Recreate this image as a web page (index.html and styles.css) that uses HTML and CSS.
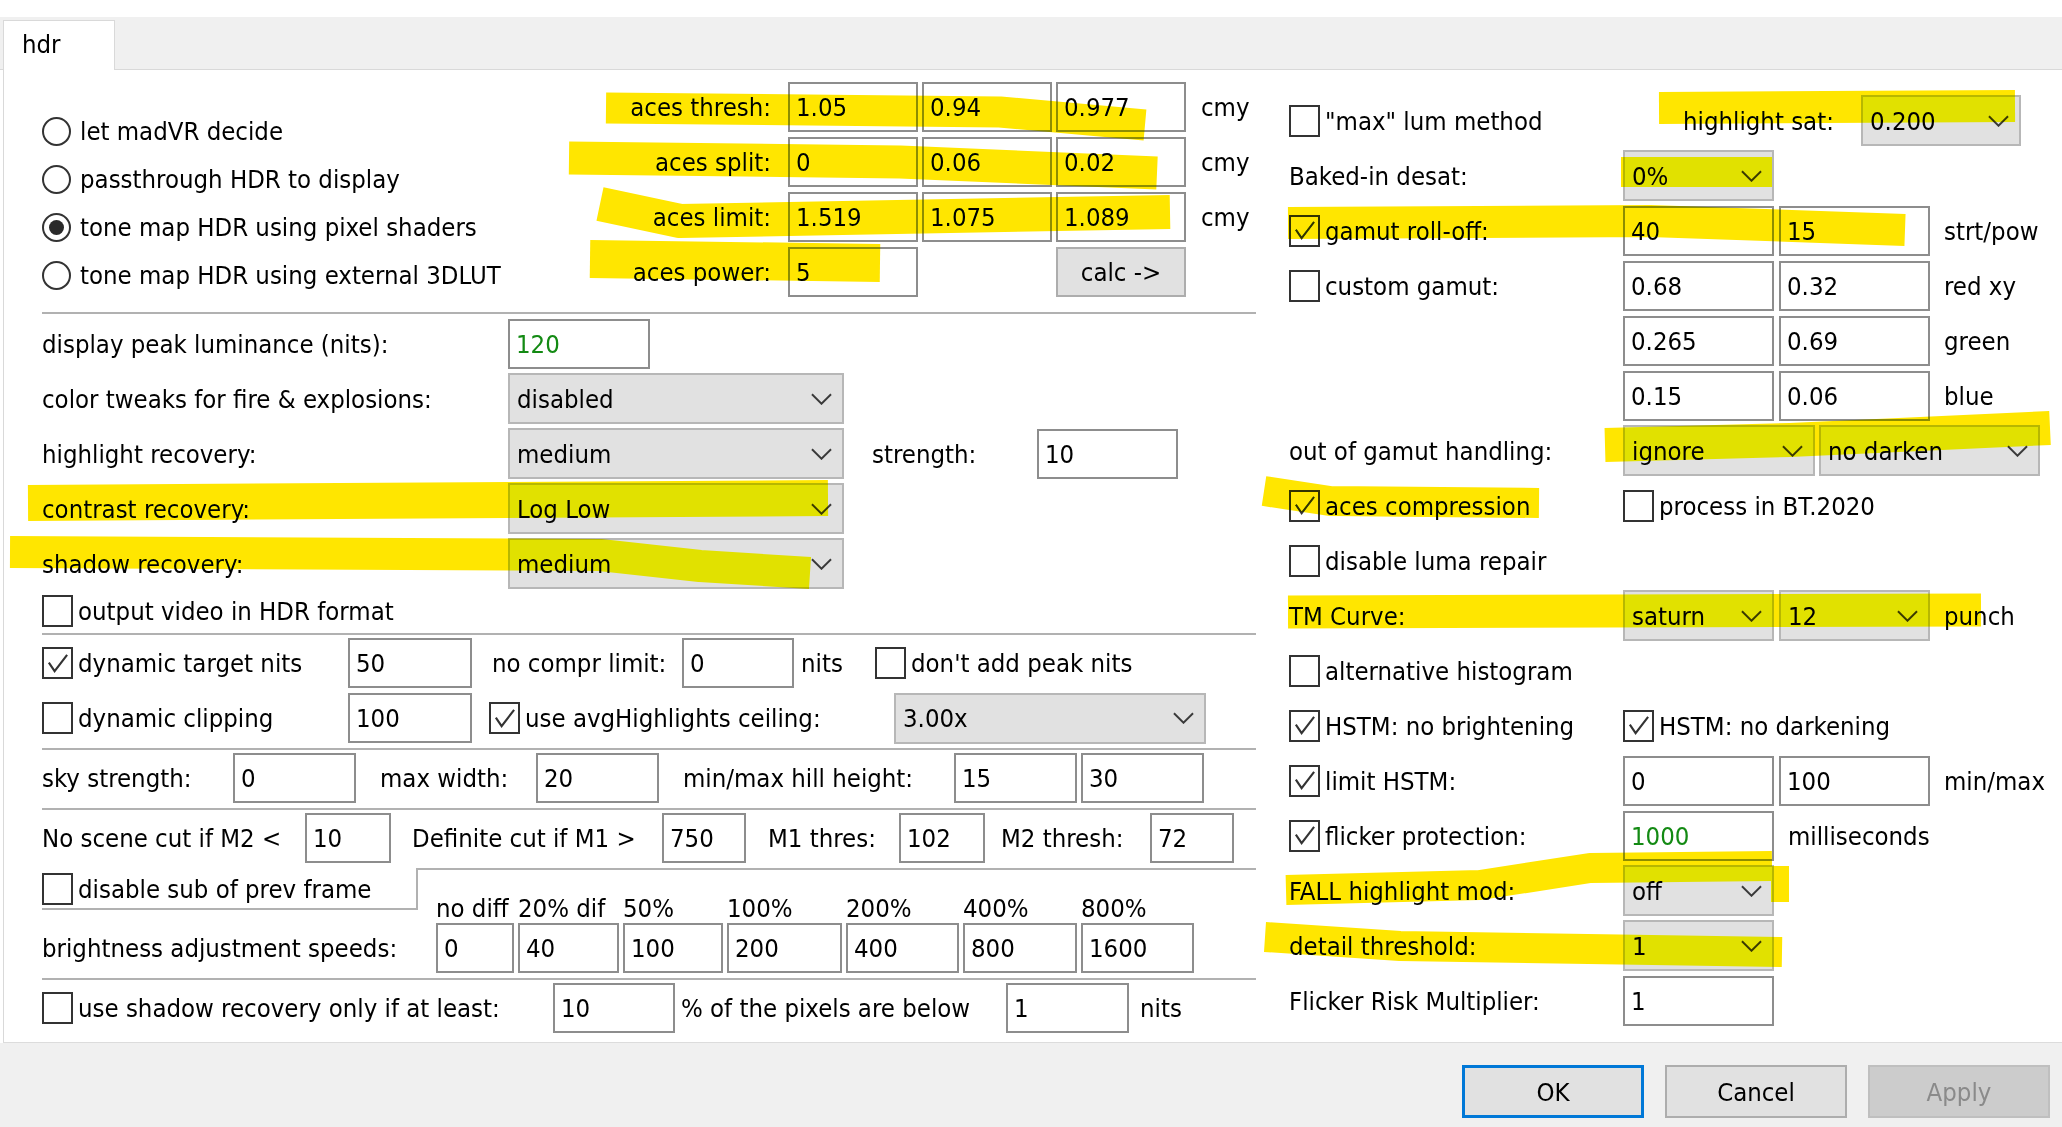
FILE: index.html
```html
<!DOCTYPE html>
<html>
<head>
<meta charset="utf-8">
<link rel="stylesheet" href="styles.css">
</head>
<body>
<div class="win">
  <div class="topgap"></div>
  <div class="tabbar"><div class="tab">hdr</div></div>
  <div class="panel">
    <div class="leftcol">
      <div class="secA">
        <div class="radios">
          <div class="rrow"><span class="radio"></span><span>let madVR decide</span></div>
          <div class="rrow"><span class="radio"></span><span>passthrough HDR to display</span></div>
          <div class="rrow"><span class="radio on"></span><span>tone map HDR using pixel shaders</span></div>
          <div class="rrow"><span class="radio"></span><span>tone map HDR using external 3DLUT</span></div>
        </div>
        <div class="aces">
          <div class="alab">aces thresh:</div><div class="inp">1.05</div><div class="inp">0.94</div><div class="inp">0.977</div><div class="unit">cmy</div>
          <div class="alab">aces split:</div><div class="inp">0</div><div class="inp">0.06</div><div class="inp">0.02</div><div class="unit">cmy</div>
          <div class="alab">aces limit:</div><div class="inp">1.519</div><div class="inp">1.075</div><div class="inp">1.089</div><div class="unit">cmy</div>
          <div class="alab">aces power:</div><div class="inp">5</div><div></div><div class="btn calc">calc -&gt;</div><div></div>
        </div>
      </div>
      <div class="sep"></div>
      <div class="secB">
        <div class="row51"><div class="lb466">display peak luminance (nits):</div><div class="inp w142 green">120</div></div>
        <div class="row51"><div class="lb466">color tweaks for fire &amp; explosions:</div><div class="dd w336"><span>disabled</span><svg class="chev" viewBox="0 0 22 12"><polyline points="1,1 11,11 21,1"/></svg></div></div>
        <div class="row51"><div class="lb466">highlight recovery:</div><div class="dd w336"><span>medium</span><svg class="chev" viewBox="0 0 22 12"><polyline points="1,1 11,11 21,1"/></svg></div><div class="lb193">strength:</div><div class="inp w141">10</div></div>
        <div class="row51"><div class="lb466">contrast recovery:</div><div class="dd w336"><span>Log Low</span><svg class="chev" viewBox="0 0 22 12"><polyline points="1,1 11,11 21,1"/></svg></div></div>
        <div class="row51"><div class="lb466">shadow recovery:</div><div class="dd w336"><span>medium</span><svg class="chev" viewBox="0 0 22 12"><polyline points="1,1 11,11 21,1"/></svg></div></div>
        <div class="row36"><span class="cb"></span><span>output video in HDR format</span></div>
      </div>
      <div class="sep"></div>
      <div class="secC">
        <div class="row50">
          <div class="cell c306"><span class="cb on"><svg viewBox="0 0 26 26"><polyline points="4,12 10,21 23,4"/></svg></span><span>dynamic target nits</span></div>
          <div class="inp w124">50</div>
          <div class="cell c210 pl20">no compr limit:</div>
          <div class="inp w112">0</div>
          <div class="cell c81 pl7">nits</div>
          <div class="cell"><span class="cb"></span><span>don't add peak nits</span></div>
        </div>
        <div class="row50">
          <div class="cell c306"><span class="cb"></span><span>dynamic clipping</span></div>
          <div class="inp w124">100</div>
          <div class="cell c422 pl17"><span class="cb on"><svg viewBox="0 0 26 26"><polyline points="4,12 10,21 23,4"/></svg></span><span>use avgHighlights ceiling:</span></div>
          <div class="dd w312"><span>3.00x</span><svg class="chev" viewBox="0 0 22 12"><polyline points="1,1 11,11 21,1"/></svg></div>
        </div>
      </div>
      <div class="sep"></div>
      <div class="secD">
        <div class="row50">
          <div class="cell c191">sky strength:</div>
          <div class="inp w123">0</div>
          <div class="cell c180 pl24">max width:</div>
          <div class="inp w123">20</div>
          <div class="cell c295 pl24">min/max hill height:</div>
          <div class="inp w123">15</div>
          <div class="inp w123 ml4">30</div>
        </div>
      </div>
      <div class="sep"></div>
      <div class="secE">
        <div class="row50">
          <div class="cell c263">No scene cut if M2 &lt;</div>
          <div class="inp w86">10</div>
          <div class="cell c271 pl21">Definite cut if M1 &gt;</div>
          <div class="inp w84">750</div>
          <div class="cell c153 pl22">M1 thres:</div>
          <div class="inp w86">102</div>
          <div class="cell c165 pl16">M2 thresh:</div>
          <div class="inp w84">72</div>
        </div>
      </div>
      <div class="step">
        <div class="stepl"><span class="cb"></span><span>disable sub of prev frame</span></div>
        <div class="stepr">
          <div class="hdrs">
            <span class="h w78">no diff</span><span class="h w101">20% dif</span><span class="h w100">50%</span><span class="h w115">100%</span><span class="h w113">200%</span><span class="h w114">400%</span><span class="h w113">800%</span>
          </div>
        </div>
      </div>
      <div class="secF">
        <div class="row50">
          <div class="cell c394">brightness adjustment speeds:</div>
          <div class="speeds">
            <div class="inp w78">0</div><div class="inp w101">40</div><div class="inp w100">100</div><div class="inp w115">200</div><div class="inp w113">400</div><div class="inp w114">800</div><div class="inp w113">1600</div>
          </div>
        </div>
      </div>
      <div class="sep"></div>
      <div class="secG">
        <div class="row50">
          <div class="cell c511"><span class="cb"></span><span>use shadow recovery only if at least:</span></div>
          <div class="inp w122">10</div>
          <div class="cell c331 pl6">% of the pixels are below</div>
          <div class="inp w123">1</div>
          <div class="cell pl11">nits</div>
        </div>
      </div>
    </div>

    <div class="rightcol">
      <div class="rrow51"><div class="cell c394"><span class="cb"></span><span>"max" lum method</span></div><div class="cell c178">highlight sat:</div><div class="dd w160"><span>0.200</span><svg class="chev" viewBox="0 0 22 12"><polyline points="1,1 11,11 21,1"/></svg></div></div>
      <div class="rrow51"><div class="cell c334">Baked-in desat:</div><div class="dd w151"><span>0%</span><svg class="chev" viewBox="0 0 22 12"><polyline points="1,1 11,11 21,1"/></svg></div></div>
      <div class="rrow51"><div class="cell c334"><span class="cb on"><svg viewBox="0 0 26 26"><polyline points="4,12 10,21 23,4"/></svg></span><span>gamut roll-off:</span></div><div class="inp w151">40</div><div class="inp w151 ml5">15</div><div class="cell pl14">strt/pow</div></div>
      <div class="rrow51"><div class="cell c334"><span class="cb"></span><span>custom gamut:</span></div><div class="inp w151">0.68</div><div class="inp w151 ml5">0.32</div><div class="cell pl14">red xy</div></div>
      <div class="rrow51"><div class="cell c334"></div><div class="inp w151">0.265</div><div class="inp w151 ml5">0.69</div><div class="cell pl14">green</div></div>
      <div class="rrow51"><div class="cell c334"></div><div class="inp w151">0.15</div><div class="inp w151 ml5">0.06</div><div class="cell pl14">blue</div></div>
      <div class="rrow51"><div class="cell c334">out of gamut handling:</div><div class="dd w192"><span>ignore</span><svg class="chev" viewBox="0 0 22 12"><polyline points="1,1 11,11 21,1"/></svg></div><div class="dd w221 ml4"><span>no darken</span><svg class="chev" viewBox="0 0 22 12"><polyline points="1,1 11,11 21,1"/></svg></div></div>
      <div class="rrow51"><div class="cell c334"><span class="cb on"><svg viewBox="0 0 26 26"><polyline points="4,12 10,21 23,4"/></svg></span><span>aces compression</span></div><div class="cell"><span class="cb"></span><span>process in BT.2020</span></div></div>
      <div class="rrow51"><div class="cell c334"><span class="cb"></span><span>disable luma repair</span></div></div>
      <div class="rrow51"><div class="cell c334">TM Curve:</div><div class="dd w151"><span>saturn</span><svg class="chev" viewBox="0 0 22 12"><polyline points="1,1 11,11 21,1"/></svg></div><div class="dd w151 ml5"><span>12</span><svg class="chev" viewBox="0 0 22 12"><polyline points="1,1 11,11 21,1"/></svg></div><div class="cell pl14">punch</div></div>
      <div class="rrow51"><div class="cell c334"><span class="cb"></span><span>alternative histogram</span></div></div>
      <div class="rrow51"><div class="cell c334"><span class="cb on"><svg viewBox="0 0 26 26"><polyline points="4,12 10,21 23,4"/></svg></span><span>HSTM: no brightening</span></div><div class="cell"><span class="cb on"><svg viewBox="0 0 26 26"><polyline points="4,12 10,21 23,4"/></svg></span><span>HSTM: no darkening</span></div></div>
      <div class="rrow51"><div class="cell c334"><span class="cb on"><svg viewBox="0 0 26 26"><polyline points="4,12 10,21 23,4"/></svg></span><span>limit HSTM:</span></div><div class="inp w151">0</div><div class="inp w151 ml5">100</div><div class="cell pl14">min/max</div></div>
      <div class="rrow51"><div class="cell c334"><span class="cb on"><svg viewBox="0 0 26 26"><polyline points="4,12 10,21 23,4"/></svg></span><span>flicker protection:</span></div><div class="inp w151 green">1000</div><div class="cell pl14">milliseconds</div></div>
      <div class="rrow51"><div class="cell c334">FALL highlight mod:</div><div class="dd w151"><span>off</span><svg class="chev" viewBox="0 0 22 12"><polyline points="1,1 11,11 21,1"/></svg></div></div>
      <div class="rrow51"><div class="cell c334">detail threshold:</div><div class="dd w151"><span>1</span><svg class="chev" viewBox="0 0 22 12"><polyline points="1,1 11,11 21,1"/></svg></div></div>
      <div class="rrow51"><div class="cell c334">Flicker Risk Multiplier:</div><div class="inp w151">1</div></div>
    </div>
  </div>
  <div class="footer">
    <div class="btn fbtn ok">OK</div>
    <div class="btn fbtn">Cancel</div>
    <div class="btn fbtn dis">Apply</div>
  </div>

  <svg class="hl" viewBox="0 0 2062 1127" width="2062" height="1127">
    <g fill="none" stroke="#ffe600" stroke-linejoin="round" stroke-linecap="butt">
      <path d="M606 108 L1000 112 L1145 125" stroke-width="31"/>
      <path d="M569 158 L900 162 L1157 173" stroke-width="33"/>
      <path d="M600 204 L680 221 L1170 212" stroke-width="34"/>
      <path d="M590 259 L880 263" stroke-width="38"/>
      <path d="M28 503 L828 498" stroke-width="36"/>
      <path d="M10 552 L600 555 L700 566 L810 573" stroke-width="32"/>
      <path d="M1659 108 L2015 106" stroke-width="32"/>
      <path d="M1621 172 L1772 172" stroke-width="30"/>
      <path d="M1288 223 L1650 221 L1905 230" stroke-width="32"/>
      <path d="M1605 445 L1790 440 L2050 428" stroke-width="34"/>
      <path d="M1264 491 L1330 501 L1539 503" stroke-width="30"/>
      <path d="M1288 612 L1981 610" stroke-width="33"/>
      <path d="M1286 890 L1480 885 L1590 868 L1772 866" stroke-width="30"/>
      <path d="M1780 866 L1780 902" stroke-width="18"/>
      <path d="M1265 937 L1400 946 L1782 952" stroke-width="30"/>
    </g>
  </svg>
</div>
</body>
</html>
```

FILE: styles.css
```css
html, body { margin: 0; padding: 0; background: #fff; }
body {
  font-family: "DejaVu Sans Condensed", "DejaVu Sans", sans-serif;
  font-stretch: condensed;
  font-size: 25.5px;
  color: #000;
}
.win { position: relative; width: 2062px; height: 1127px; overflow: hidden; background: #fff; }
.topgap { height: 17px; }
.tabbar {
  height: 52px; background: #f0f0f0; border-bottom: 1px solid #d9d9d9;
  display: flex; align-items: flex-end; padding-left: 3px;
}
.tab {
  width: 112px; height: 50px; box-sizing: border-box; background: #fff;
  border: 1px solid #d9d9d9; border-bottom: none; margin-bottom: -1px;
  padding: 9px 0 0 18px; line-height: 28px;
}
.panel {
  height: 973px; box-sizing: border-box; margin-left: 3px;
  border-left: 1px solid #d9d9d9; border-bottom: 1px solid #dcdcdc;
  display: flex;
}
.leftcol { width: 1214px; margin-left: 38px; display: flex; flex-direction: column; }
.rightcol { margin-left: 33px; padding-top: 25px; display: flex; flex-direction: column; gap: 4px; }

.sep { height: 2px; background: #b1b1b1; }

/* Section A */
.secA { height: 242px; display: flex; }
.radios { width: 542px; box-sizing: border-box; padding-top: 37px; }
.rrow { height: 48px; display: flex; align-items: center; white-space: nowrap; }
.radio {
  width: 29px; height: 29px; box-sizing: border-box; border: 2px solid #333;
  border-radius: 50%; margin-right: 9px; flex: none; display: flex;
  align-items: center; justify-content: center; background: #fff;
}
.radio.on::after { content: ""; width: 15px; height: 15px; border-radius: 50%; background: #2a2a2a; }
.aces {
  padding-top: 12px; display: grid;
  grid-template-columns: 200px 130px 130px 130px auto;
  grid-auto-rows: 50px; column-gap: 4px; row-gap: 5px; align-content: start;
}
.alab { display: flex; align-items: center; justify-content: flex-end; padding-right: 13px; white-space: nowrap; }
.unit { display: flex; align-items: center; padding-left: 11px; }

/* common controls */
.inp {
  height: 50px; box-sizing: border-box; border: 2px solid #8d8d8d; background: #fff;
  padding-left: 6px; display: flex; align-items: center; white-space: nowrap; flex: none;
}
.green { color: #138a13; }
.dd {
  height: 51px; box-sizing: border-box; border: 2px solid #b7b7b7; background: #e1e1e1;
  display: flex; align-items: center; justify-content: space-between;
  padding: 0 10px 0 7px; white-space: nowrap; flex: none;
}
.chev { width: 21px; height: 12px; fill: none; stroke: #3a3a3a; stroke-width: 2; flex: none; }
.cb {
  width: 31px; height: 32px; box-sizing: border-box; border: 2px solid #333; background: #fff;
  margin-right: 5px; flex: none; display: flex; align-items: center; justify-content: center;
}
.cb svg { width: 25px; height: 25px; fill: none; stroke: #333; stroke-width: 2.2; }
.btn {
  box-sizing: border-box; background: #e1e1e1; border: 2px solid #adadad;
  display: flex; align-items: center; justify-content: center;
}
.calc { grid-column: 4; }

.cell { display: flex; align-items: center; white-space: nowrap; flex: none; height: 100%; box-sizing: border-box; }

/* rows */
.secB { padding: 4px 0 4px; display: flex; flex-direction: column; gap: 4px; }
.row51 { height: 51px; display: flex; align-items: center; }
.row36 { height: 36px; display: flex; align-items: center; white-space: nowrap; }
.secC, .secD, .secE, .secF, .secG { padding: 3px 0 5px; display: flex; flex-direction: column; gap: 5px; }
.secF { padding-top: 0; }
.row50 { height: 50px; display: flex; align-items: center; }
.lb466 { width: 466px; flex: none; white-space: nowrap; }
.lb193 { width: 193px; flex: none; padding-left: 28px; box-sizing: border-box; }

.step { height: 55px; display: flex; }
.stepl {
  width: 376px; height: 42px; box-sizing: border-box; border-bottom: 2px solid #b1b1b1;
  border-right: 2px solid #b1b1b1; display: flex; align-items: center; white-space: nowrap; flex: none;
  padding-top: 2px;
}
.stepr { flex: 1; border-top: 2px solid #b1b1b1; display: flex; align-items: flex-end; }
.hdrs { display: flex; gap: 4px; margin-left: 18px; height: 28px; }
.h { display: block; padding-left: 0; white-space: nowrap; line-height: 26px; }
.speeds { display: flex; gap: 4px; }

.rightcol .cell { height: 51px; }
.rrow51 { height: 51px; display: flex; align-items: center; }

/* width helpers */
.w78 { width: 78px; } .w84 { width: 84px; } .w86 { width: 86px; }
.w100 { width: 100px; } .w101 { width: 101px; } .w112 { width: 112px; }
.w113 { width: 113px; } .w114 { width: 114px; } .w115 { width: 115px; }
.w122 { width: 122px; } .w123 { width: 123px; } .w124 { width: 124px; }
.w141 { width: 141px; } .w142 { width: 142px; } .w151 { width: 151px; }
.w160 { width: 160px; } .w192 { width: 192px; } .w221 { width: 221px; }
.w312 { width: 312px; } .w336 { width: 336px; }
.c81 { width: 81px; } .c153 { width: 153px; } .c165 { width: 165px; }
.c178 { width: 178px; } .c180 { width: 180px; } .c191 { width: 191px; }
.c210 { width: 210px; } .c263 { width: 263px; } .c271 { width: 271px; }
.c295 { width: 295px; } .c306 { width: 306px; } .c331 { width: 331px; }
.c334 { width: 334px; } .c394 { width: 394px; } .c422 { width: 422px; }
.c511 { width: 511px; }
.pl6 { padding-left: 6px; } .pl7 { padding-left: 7px; } .pl11 { padding-left: 11px; }
.pl14 { padding-left: 14px; } .pl16 { padding-left: 16px; } .pl17 { padding-left: 17px; }
.pl20 { padding-left: 20px; } .pl21 { padding-left: 21px; } .pl22 { padding-left: 22px; }
.pl24 { padding-left: 24px; }
.ml4 { margin-left: 4px; } .ml5 { margin-left: 5px; }

.footer {
  height: 84px; background: #f0f0f0; display: flex; justify-content: flex-end;
  align-items: flex-start; padding: 22px 12px 0 0; box-sizing: border-box; gap: 21px;
}
.fbtn { width: 182px; height: 53px; }
.ok { border: 3px solid #0078d7; }
.dis { background: #cccccc; border-color: #bfbfbf; color: #8a8a8a; }

.hl { position: absolute; left: 0; top: 0; pointer-events: none; mix-blend-mode: darken; }
```
